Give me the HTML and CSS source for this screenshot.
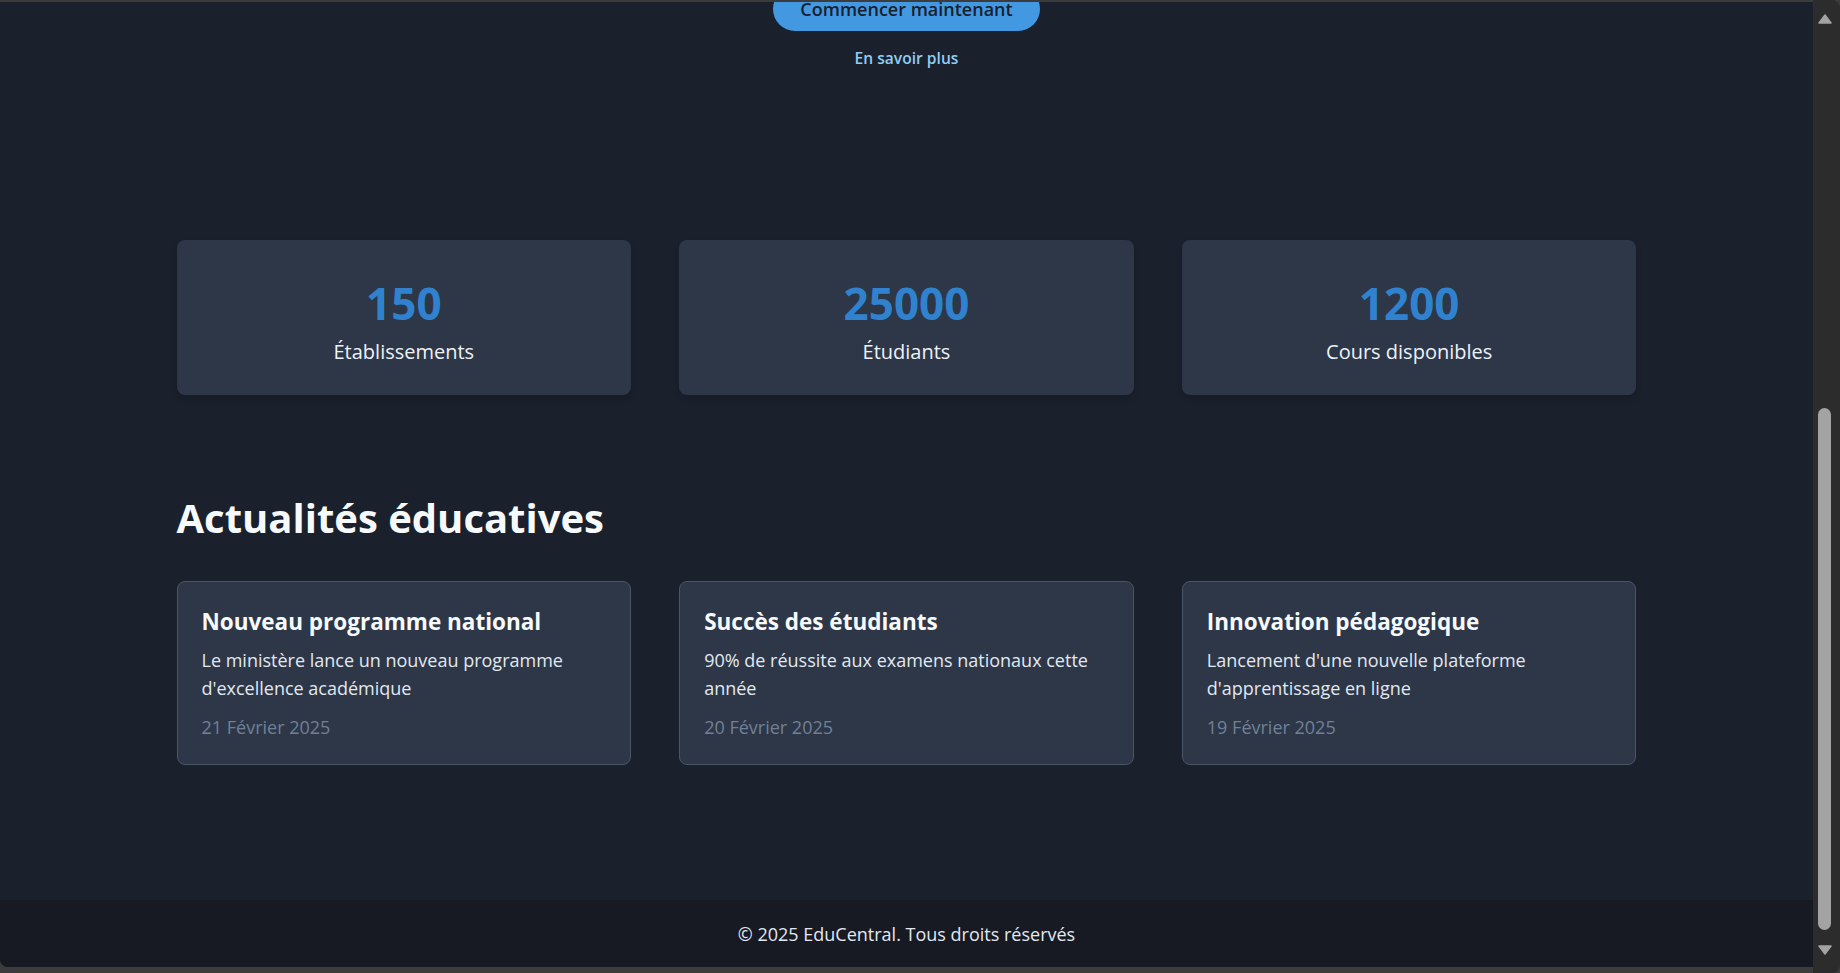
FILE: index.html
```html
<!DOCTYPE html>
<html lang="fr">
<head>
<meta charset="utf-8">
<title>EduCentral</title>
<link rel="stylesheet" href="styles.css">
</head>
<body>
<div class="window">
  <div class="viewport">
    <main class="main">
      <section class="hero">
        <a class="btn-primary" href="#">Commencer maintenant</a>
        <a class="link-more" href="#">En savoir plus</a>
      </section>

      <section class="container stats">
        <div class="stat-card">
          <div class="stat-number">150</div>
          <div class="stat-label">Établissements</div>
        </div>
        <div class="stat-card">
          <div class="stat-number">25000</div>
          <div class="stat-label">Étudiants</div>
        </div>
        <div class="stat-card">
          <div class="stat-number">1200</div>
          <div class="stat-label">Cours disponibles</div>
        </div>
      </section>

      <section class="container news">
        <h2 class="section-title">Actualités éducatives</h2>
        <div class="news-grid">
          <article class="news-card">
            <h3 class="news-title">Nouveau programme national</h3>
            <p class="news-text">Le ministère lance un nouveau programme d'excellence académique</p>
            <span class="news-date">21 Février 2025</span>
          </article>
          <article class="news-card">
            <h3 class="news-title">Succès des étudiants</h3>
            <p class="news-text">90% de réussite aux examens nationaux cette année</p>
            <span class="news-date">20 Février 2025</span>
          </article>
          <article class="news-card">
            <h3 class="news-title">Innovation pédagogique</h3>
            <p class="news-text">Lancement d'une nouvelle plateforme d'apprentissage en ligne</p>
            <span class="news-date">19 Février 2025</span>
          </article>
        </div>
      </section>
    </main>

    <footer class="footer">
      <p>© 2025 EduCentral. Tous droits réservés</p>
    </footer>
  </div>

  <div class="scrollbar" aria-hidden="true">
    <svg class="sb-arrow" width="14" height="10" viewBox="0 0 14 10"><polygon points="7,1 13,9 1,9" fill="#a3a3a3" stroke="#a3a3a3" stroke-width="1.5" stroke-linejoin="round"/></svg>
    <div class="sb-space"></div>
    <div class="sb-thumb"></div>
    <svg class="sb-arrow sb-arrow-down" width="14" height="10" viewBox="0 0 14 10"><polygon points="1,1 13,1 7,9" fill="#a3a3a3" stroke="#a3a3a3" stroke-width="1.5" stroke-linejoin="round"/></svg>
  </div>
</div>
</body>
</html>
```

FILE: styles.css
```css
* { box-sizing: border-box; }

html, body {
  margin: 0;
  height: 100%;
}

body {
  background: #3c3c3c;
  font-family: "Open Sans", "Noto Sans", "Liberation Sans", sans-serif;
  overflow: hidden;
}

.window {
  display: flex;
  width: 1840px;
  height: 973px;
}

.viewport {
  flex: 1;
  display: flex;
  flex-direction: column;
  margin: 2px 0 6px;
  background: #1a202c;
  border-bottom-left-radius: 8px;
  overflow: hidden;
}

.main {
  flex: 1;
}

/* Hero (scrolled, top cut off) */
.hero {
  display: flex;
  flex-direction: column;
  align-items: center;
  gap: 15px;
  margin-top: -15px;
  padding-bottom: 170px;
}

.btn-primary {
  display: inline-block;
  padding: 10px 27px;
  font-size: 18px;
  line-height: 24px;
  font-weight: 600;
  color: #1a202c;
  background: #4299e1;
  border-radius: 9999px;
  text-decoration: none;
}

.link-more {
  font-size: 15.6px;
  line-height: 24px;
  font-weight: 600;
  color: #90cdf4;
  text-decoration: none;
}

.container {
  max-width: 1460px;
  margin: 0 auto;
}

/* Stats */
.stats {
  display: grid;
  grid-template-columns: repeat(3, 1fr);
  gap: 48px;
  margin-bottom: 99px;
}

.stat-card {
  background: #2d3748;
  border-radius: 8px;
  padding: 35px 24px 28px;
  text-align: center;
  box-shadow: 0 4px 6px rgba(0, 0, 0, 0.12);
}

.stat-number {
  font-size: 44px;
  line-height: 57px;
  font-weight: 700;
  color: #3182ce;
  margin-bottom: 5px;
}

.stat-label {
  font-size: 20px;
  line-height: 30px;
  color: #edf2f7;
}

/* News */
.section-title {
  margin: 0 0 39px;
  font-size: 40px;
  line-height: 48px;
  font-weight: 700;
  color: #f7fafc;
}

.news-grid {
  display: grid;
  grid-template-columns: repeat(3, 1fr);
  gap: 48px;
}

.news-card {
  display: flex;
  flex-direction: column;
  background: #2d3748;
  border: 1px solid #4a5568;
  border-radius: 8px;
  padding: 26px 24px 24px;
}

.news-title {
  margin: 0 0 9px;
  font-size: 22.5px;
  line-height: 28.6px;
  font-weight: 700;
  color: #f7fafc;
}

.news-text {
  margin: 0 0 11px;
  font-size: 18px;
  line-height: 28.8px;
  color: #e2e8f0;
}

.news-date {
  font-size: 18px;
  line-height: 26px;
  color: #718096;
}

/* Footer */
.footer {
  background: #171923;
  padding: 21px 20px 19px;
  text-align: center;
}

.footer p {
  margin: 0;
  font-size: 18px;
  line-height: 27px;
  color: #e2e8f0;
}

/* Window scrollbar */
.scrollbar {
  width: 27px;
  display: flex;
  flex-direction: column;
  align-items: center;
  padding: 14px 4px 17px 0;
  background: #2c2c2c;
  border-radius: 0 8px 8px 0;
}

.sb-arrow {
  display: block;
  flex: none;
}

.sb-space {
  flex: 1;
}

.sb-thumb {
  width: 13px;
  height: 522px;
  flex: none;
  border-radius: 7px;
  background: #a3a3a3;
}

.sb-arrow-down {
  margin-top: 14px;
  height: 12px;
}
```
